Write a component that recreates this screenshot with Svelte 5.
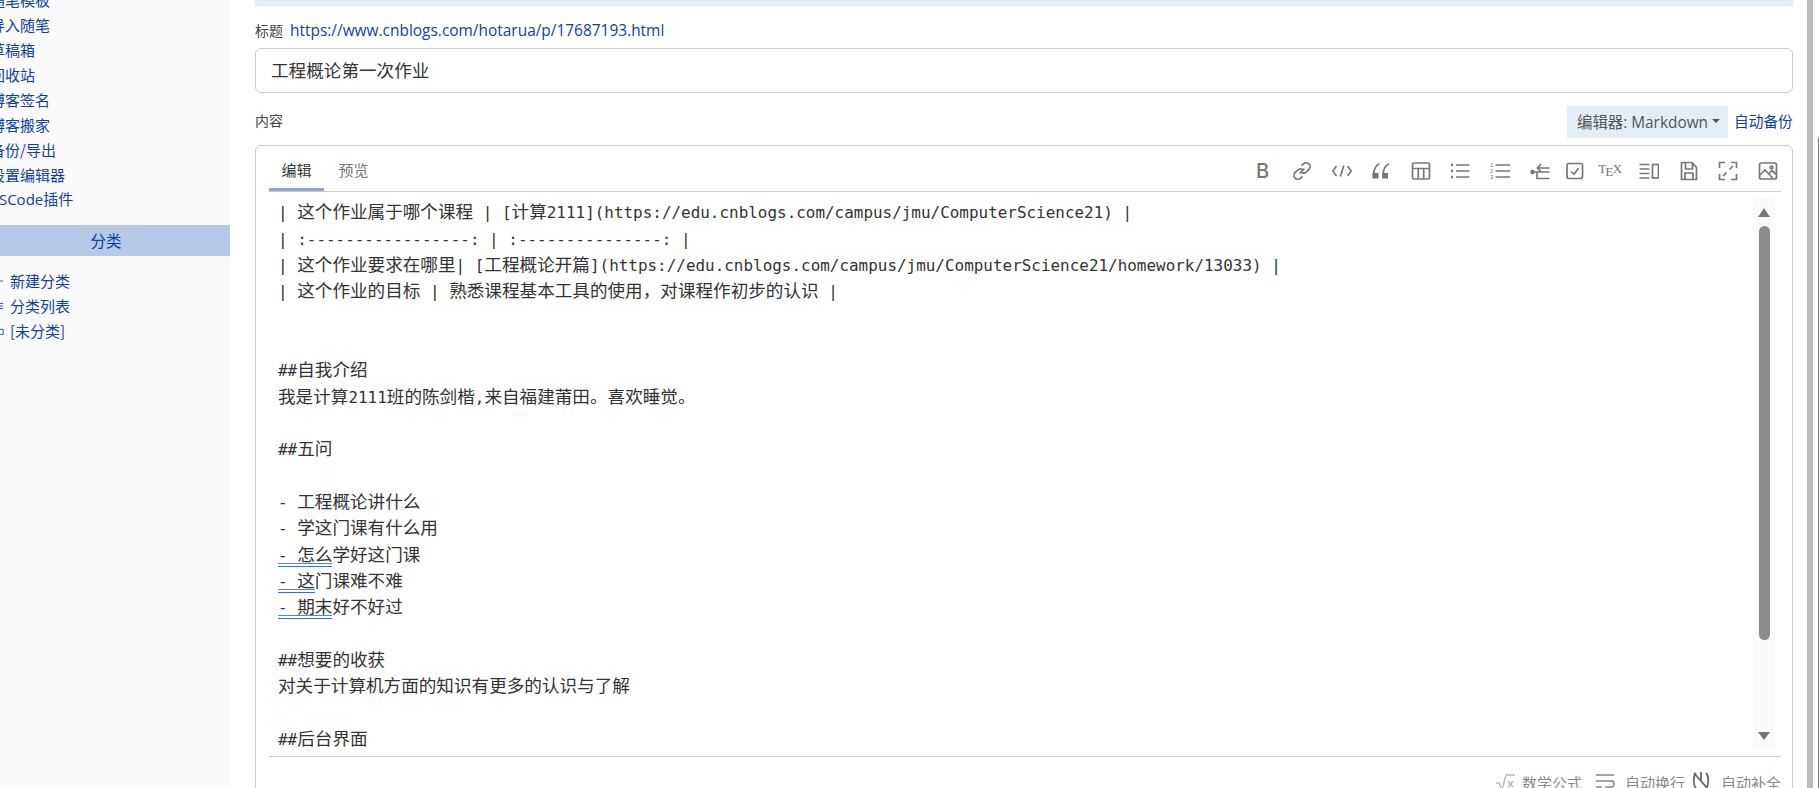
<script>
  const sideTop = ['随笔模板', '导入随笔', '草稿箱', '回收站', '博客签名', '博客搬家', '备份/导出', '设置编辑器', 'VSCode插件'];
  const lines = [
    { t: '| 这个作业属于哪个课程 | [计算2111](https://edu.cnblogs.com/campus/jmu/ComputerScience21) |' },
    { t: '| :-----------------: | :---------------: |' },
    { t: '| 这个作业要求在哪里| [工程概论开篇](https://edu.cnblogs.com/campus/jmu/ComputerScience21/homework/13033) |' },
    { t: '| 这个作业的目标 | 熟悉课程基本工具的使用，对课程作初步的认识 |' },
    { t: '' },
    { t: '' },
    { t: '##自我介绍' },
    { t: '我是计算2111班的陈剑楷,来自福建莆田。喜欢睡觉。' },
    { t: '' },
    { t: '##五问' },
    { t: '' },
    { t: '- 工程概论讲什么' },
    { t: '- 学这门课有什么用' },
    { u: '- 怎么', t: '学好这门课' },
    { u: '- 这', t: '门课难不难' },
    { u: '- 期末', t: '好不好过' },
    { t: '' },
    { t: '##想要的收获' },
    { t: '对关于计算机方面的知识有更多的认识与了解' },
    { t: '' },
    { t: '##后台界面' },
    { t: '' }
  ];
  const runs = (s) => s.split(/([\x00-\x7f]+)/).filter(Boolean).map((text) => ({ text, latin: /^[\x00-\x7f]/.test(text) }));
</script>

{#snippet textRuns(s)}{#each runs(s) as r}<span class:latin={r.latin}>{r.text}</span>{/each}{/snippet}

<div class="page">
  <aside class="side">
    <ul class="side-list top">
      {#each sideTop as item}<li>{item}</li>{/each}
    </ul>
    <div class="side-head">分类</div>
    <ul class="side-list cats">
      <li><svg class="mini" viewBox="0 0 12 12"><path d="M1 6h10M6 1v10" /></svg>新建分类</li>
      <li><svg class="mini" viewBox="0 0 12 12"><path d="M1 3h10M1 6h10M1 9h10" /></svg>分类列表</li>
      <li><svg class="mini" viewBox="0 0 12 12"><path d="M1 2h4l1 2h5v6H1z" /></svg>[未分类]</li>
    </ul>
  </aside>

  <main class="main">
    <div class="strip"></div>
    <div class="title-label">标题 <span class="url">https://www.cnblogs.com/hotarua/p/17687193.html</span></div>
    <div class="title-input">工程概论第一次作业</div>
    <div class="content-row">
      <span class="content-label">内容</span>
      <span class="editor-btn">编辑器: Markdown<i class="caret"></i></span>
      <span class="backup">自动备份</span>
    </div>

    <section class="editor">
      <div class="tabbar">
        <span class="tab active">编辑</span>
        <span class="tab">预览</span>
        <div class="tools">
          <span class="tool b">B</span>
          <svg class="tool" viewBox="0 0 20 20"><path d="M7.6 12.4l4.8-4.8M9.6 4.6l1.7-1.7a3.9 3.9 0 0 1 5.6 5.5l-2.5 2.5a3.9 3.9 0 0 1-5.2.3M10.4 15.4l-1.7 1.7a3.9 3.9 0 0 1-5.6-5.5l2.5-2.5a3.9 3.9 0 0 1 5.2-.3" /></svg>
          <svg class="tool" viewBox="0 0 20 20"><path d="M4.5 5L0.8 10l3.7 5M15.5 5l3.7 5-3.7 5M11.8 4.5l-3.4 11" /></svg>
          <svg class="tool" viewBox="0 0 20 20"><path class="fill" d="M1.5 12h6v5.5h-6zM11 12h6v5.5h-6z" /><path d="M2.5 14C2.8 8 4.5 4.5 8.5 2.8M12 14c.3-6 2-9.5 6-11.2" /></svg>
          <svg class="tool" viewBox="0 0 20 20"><rect x="1.5" y="2" width="17" height="16" rx="1.5" /><path d="M2 7.5h16M7.3 7.5v10M12.7 7.5v10" /></svg>
          <svg class="tool" viewBox="0 0 20 20"><path d="M6 4h13.5M6 10h13.5M6 16h13.5" /><path class="thick" d="M1 4h2M1 10h2M1 16h2" /></svg>
          <svg class="tool" viewBox="0 0 20 20"><path d="M5.5 4h14.5M5.5 10h14.5M5.5 16h14.5" /><text x="0" y="6" class="num">1</text><text x="0" y="12" class="num">2</text><text x="0" y="18" class="num">3</text></svg>
          <svg class="tool" viewBox="0 0 20 20"><path d="M7 7h12.5M3 11h16.5M7 11v6.5h12.5M11 3L7.5 7l3.5 4" /><circle class="fill" cx="2.5" cy="11" r="2.2" /></svg>
          <svg class="tool check" viewBox="0 0 20 20"><rect x="2" y="2.5" width="15.5" height="15" rx="2" /><path d="M6 10.5l3 2.8 4.5-6" /></svg>
          <span class="tool tex">T<small>E</small>X</span>
          <svg class="tool side-by" viewBox="0 0 20 20"><path d="M0.5 3.5h10M0.5 8h10M0.5 12.5h10M0.5 17h10" /><rect x="13.5" y="3.5" width="6" height="13.5" /></svg>
          <svg class="tool" viewBox="0 0 20 20"><path d="M2.5 1.5h10.5l4.5 5v12H2.5zM6.5 1.5V8h7V1.5M6 18.5V12h8v6.5" /></svg>
          <svg class="tool" viewBox="0 0 20 20"><path d="M1.5 7V1.5H7M13 1.5h5.5V7M18.5 13v5.5H13M7 18.5H1.5V13M15 5l-3.5 3.5M5 15l3.5-3.5" /></svg>
          <svg class="tool" viewBox="0 0 20 20"><rect x="1.5" y="2" width="17" height="16" rx="2" /><path d="M2 14l5-5 8 8.5M11 12.5l3-3 4.5 4" /><circle cx="13.5" cy="6.5" r="1.3" /></svg>
        </div>
      </div>

      <div class="code-area">
        <div class="code">
          {#each lines as line}
            <div class="line">{#if line.u}<span class="squiggle">{@render textRuns(line.u)}</span>{/if}{@render textRuns(line.t)}</div>
          {/each}
        </div>
        <div class="vbar">
          <i class="arrow up"></i>
          <i class="thumb"></i>
          <i class="arrow down"></i>
        </div>
      </div>

      <div class="status">
        <svg class="st sqrt" viewBox="0 0 20 20"><path d="M1 11l3 0 3 7 4-15h9M13 9l5 6M18 9l-5 6" /></svg>
        <span class="st-label">数学公式</span>
        <svg class="st wrap" viewBox="0 0 20 20"><path d="M1 3h18M1 9h18M1 15h6M10 15h6a3 3 0 0 0 0-6" /></svg>
        <span class="st-label">自动换行</span>
        <svg class="st auto" viewBox="0 0 20 20"><path d="M5 2C2 5 2 14 5 17M15 2c3 3 3 12 0 15M10 1v8M3 2l14 16" /></svg>
        <span class="st-label">自动补全</span>
      </div>
    </section>
  </main>

  <div class="page-scroll"></div>
  <div class="page-edge"></div>
</div>

<style>
  :global(body) {
    margin: 0;
    background: #fff;
    overflow: hidden;
  }
  .page {
    display: flex;
    width: 1819px;
    height: 788px;
    overflow: hidden;
    background: #fff;
    font-family: "Open Sans", "Noto Sans CJK SC", sans-serif;
    color: #333;
  }
  .side {
    flex: 0 0 230px;
    background: #fafafa;
    overflow: hidden;
    color: #0f3fa0;
    font-family: "Noto Sans CJK SC", sans-serif;
    font-size: 15px;
  }
  .side-list {
    list-style: none;
    margin: 0;
    padding: 0;
  }
  .side-list li {
    height: 25px;
    line-height: 25px;
    white-space: nowrap;
  }
  .top {
    margin: -13.5px 0 0 -10px;
  }
  .top li:last-child {
    font-family: "Open Sans", "Noto Sans CJK SC", sans-serif;
  }
  .side-head {
    height: 31px;
    line-height: 31px;
    margin: 13.5px 0 12px -18px;
    background: #b5c9e6;
    text-align: center;
    font-size: 15.5px;
  }
  .cats li {
    display: flex;
    align-items: center;
    gap: 6px;
    margin-left: -6px;
  }
  .mini {
    width: 10px;
    height: 10px;
    flex: none;
    fill: none;
    stroke: #0f3fa0;
    stroke-width: 1;
  }
  .main {
    flex: 0 0 1538px;
    padding: 0 0 0 25px;
    overflow: hidden;
    display: flex;
    flex-direction: column;
  }
  .strip {
    height: 6px;
    flex: none;
    background: #e4ecf6;
  }
  .title-label {
    flex: none;
    display: flex;
    align-items: center;
    gap: 7px;
    height: 22px;
    margin: 13px 0 7px;
    font-size: 14px;
    color: #444;
  }
  .url {
    font-family: "Open Sans", sans-serif;
    font-size: 15.45px;
    color: #0f3fa0;
  }
  .title-input {
    flex: none;
    box-sizing: border-box;
    height: 45px;
    line-height: 43px;
    padding-left: 15px;
    border: 1px solid #ccc;
    border-radius: 6px;
    font-size: 17.6px;
    color: #333;
  }
  .content-row {
    flex: none;
    display: flex;
    align-items: center;
    height: 32px;
    margin: 13px 0 7px;
    font-size: 14px;
  }
  .content-label {
    margin: -4px auto 0 0;
    color: #444;
  }
  .editor-btn {
    display: flex;
    align-items: center;
    height: 32px;
    width: 161px;
    box-sizing: border-box;
    padding: 0 0 2px 10px;
    background: #e4ecf6;
    color: #555;
    font-size: 15.4px;
    white-space: nowrap;
  }
  .caret {
    margin-left: 4px;
    border: 4px solid transparent;
    border-top: 4px solid #555;
    border-bottom: 0;
  }
  .backup {
    margin: -4px 0 0 6px;
    width: 59px;
    font-size: 14.7px;
    color: #0f3fa0;
    white-space: nowrap;
  }
  .editor {
    flex: none;
    box-sizing: border-box;
    height: 700px;
    padding: 0 11px 0 13px;
    border: 1px solid #ccc;
    border-radius: 6px;
    background: #fff;
  }
  .tabbar {
    display: flex;
    align-items: flex-start;
    height: 45px;
    border-bottom: 1px solid #ccc;
    position: relative;
    font-size: 15px;
  }
  .tab {
    box-sizing: border-box;
    height: 45px;
    width: 55px;
    padding-top: 12px;
    line-height: 24px;
    text-align: center;
    color: #777;
    margin-right: 2px;
  }
  .tab.active {
    color: #333;
    border-bottom: 3px solid #8fa3cc;
  }
  .tools {
    display: flex;
    align-items: center;
    gap: 19.6px;
    margin-left: auto;
    padding: 15px 3px 0 0;
    height: 20px;
    color: #777;
  }
  .tool {
    width: 20px;
    height: 20px;
    flex: none;
    fill: none;
    stroke: #777;
    stroke-width: 1.7;
    text-align: center;
  }
  .tool .fill,
  .st .fill {
    fill: #777;
    stroke: none;
  }
  .tool .thick {
    stroke-width: 2.6;
  }
  .tool .num {
    font: 6px "Liberation Sans", sans-serif;
    fill: #777;
    stroke: none;
  }
  .b {
    font: 500 20px/20px "Inter", sans-serif;
  }
  .check {
    margin-left: -4.6px;
  }
  .tex {
    width: 30px;
    margin-left: -9.6px;
    font: 13.5px/16px "Liberation Serif", serif;
    white-space: nowrap;
    letter-spacing: -1.2px;
    padding-bottom: 4px;
    height: 16px;
  }
  .tex small {
    font-size: 13.5px;
    position: relative;
    top: 3px;
  }
  .side-by {
    margin-left: -5px;
  }
  .code-area {
    display: flex;
    height: 564px;
    overflow: hidden;
    border-bottom: 1px solid #ccc;
  }
  .code {
    flex: 1;
    padding: 6.3px 0 0 9px;
    font-family: "Noto Sans CJK SC", sans-serif;
    font-size: 17.6px;
    color: #333;
    overflow: hidden;
  }
  .line {
    height: 26.33px;
    line-height: 26.33px;
    white-space: pre;
    overflow: visible;
  }
  .latin {
    font-family: "DejaVu Sans Mono", monospace;
    font-size: 15.95px;
  }
  .squiggle {
    position: relative;
  }
  .squiggle::after {
    content: "";
    position: absolute;
    left: 0;
    right: 0;
    bottom: -1px;
    height: 2px;
    border-top: 1px solid #5580f5;
    border-bottom: 1px solid #3a6af5;
  }
  .vbar {
    flex: 0 0 21px;
    box-sizing: border-box;
    margin: 6px 6px 7px 0;
    padding: 10px 5px 9px;
    background: #fafafa;
    display: flex;
    flex-direction: column;
    align-items: center;
  }
  .thumb {
    flex: 0 0 414px;
    width: 11px;
    margin: 9px 0 auto;
    border-radius: 5.5px;
    background: #8c8c8c;
  }
  .arrow {
    flex: none;
    width: 0;
    height: 0;
    border-left: 6px solid transparent;
    border-right: 6px solid transparent;
  }
  .arrow.up {
    border-bottom: 9px solid #777;
  }
  .arrow.down {
    border-top: 8px solid #777;
  }
  .status {
    display: flex;
    align-items: center;
    justify-content: flex-end;
    height: 50px;
    font-size: 15px;
    color: #888;
  }
  .st {
    width: 20px;
    height: 20px;
    flex: none;
    fill: none;
    stroke: #888;
    stroke-width: 1.5;
  }
  .sqrt {
    stroke: #bbb;
    margin-right: 7px;
  }
  .wrap {
    margin: 0 10px 0 13px;
  }
  .auto {
    margin: -2.5px 10px 0 6px;
    stroke: #666;
    stroke-width: 1.8;
  }
  .st-label {
    white-space: nowrap;
  }
  .page-scroll {
    flex: none;
    width: 6px;
    height: 788px;
    margin-left: 14px;
    background: #bbb;
  }
  .page-edge {
    flex: none;
    width: 1px;
    margin: 138px 0 0 5px;
    background: #777;
  }
</style>
